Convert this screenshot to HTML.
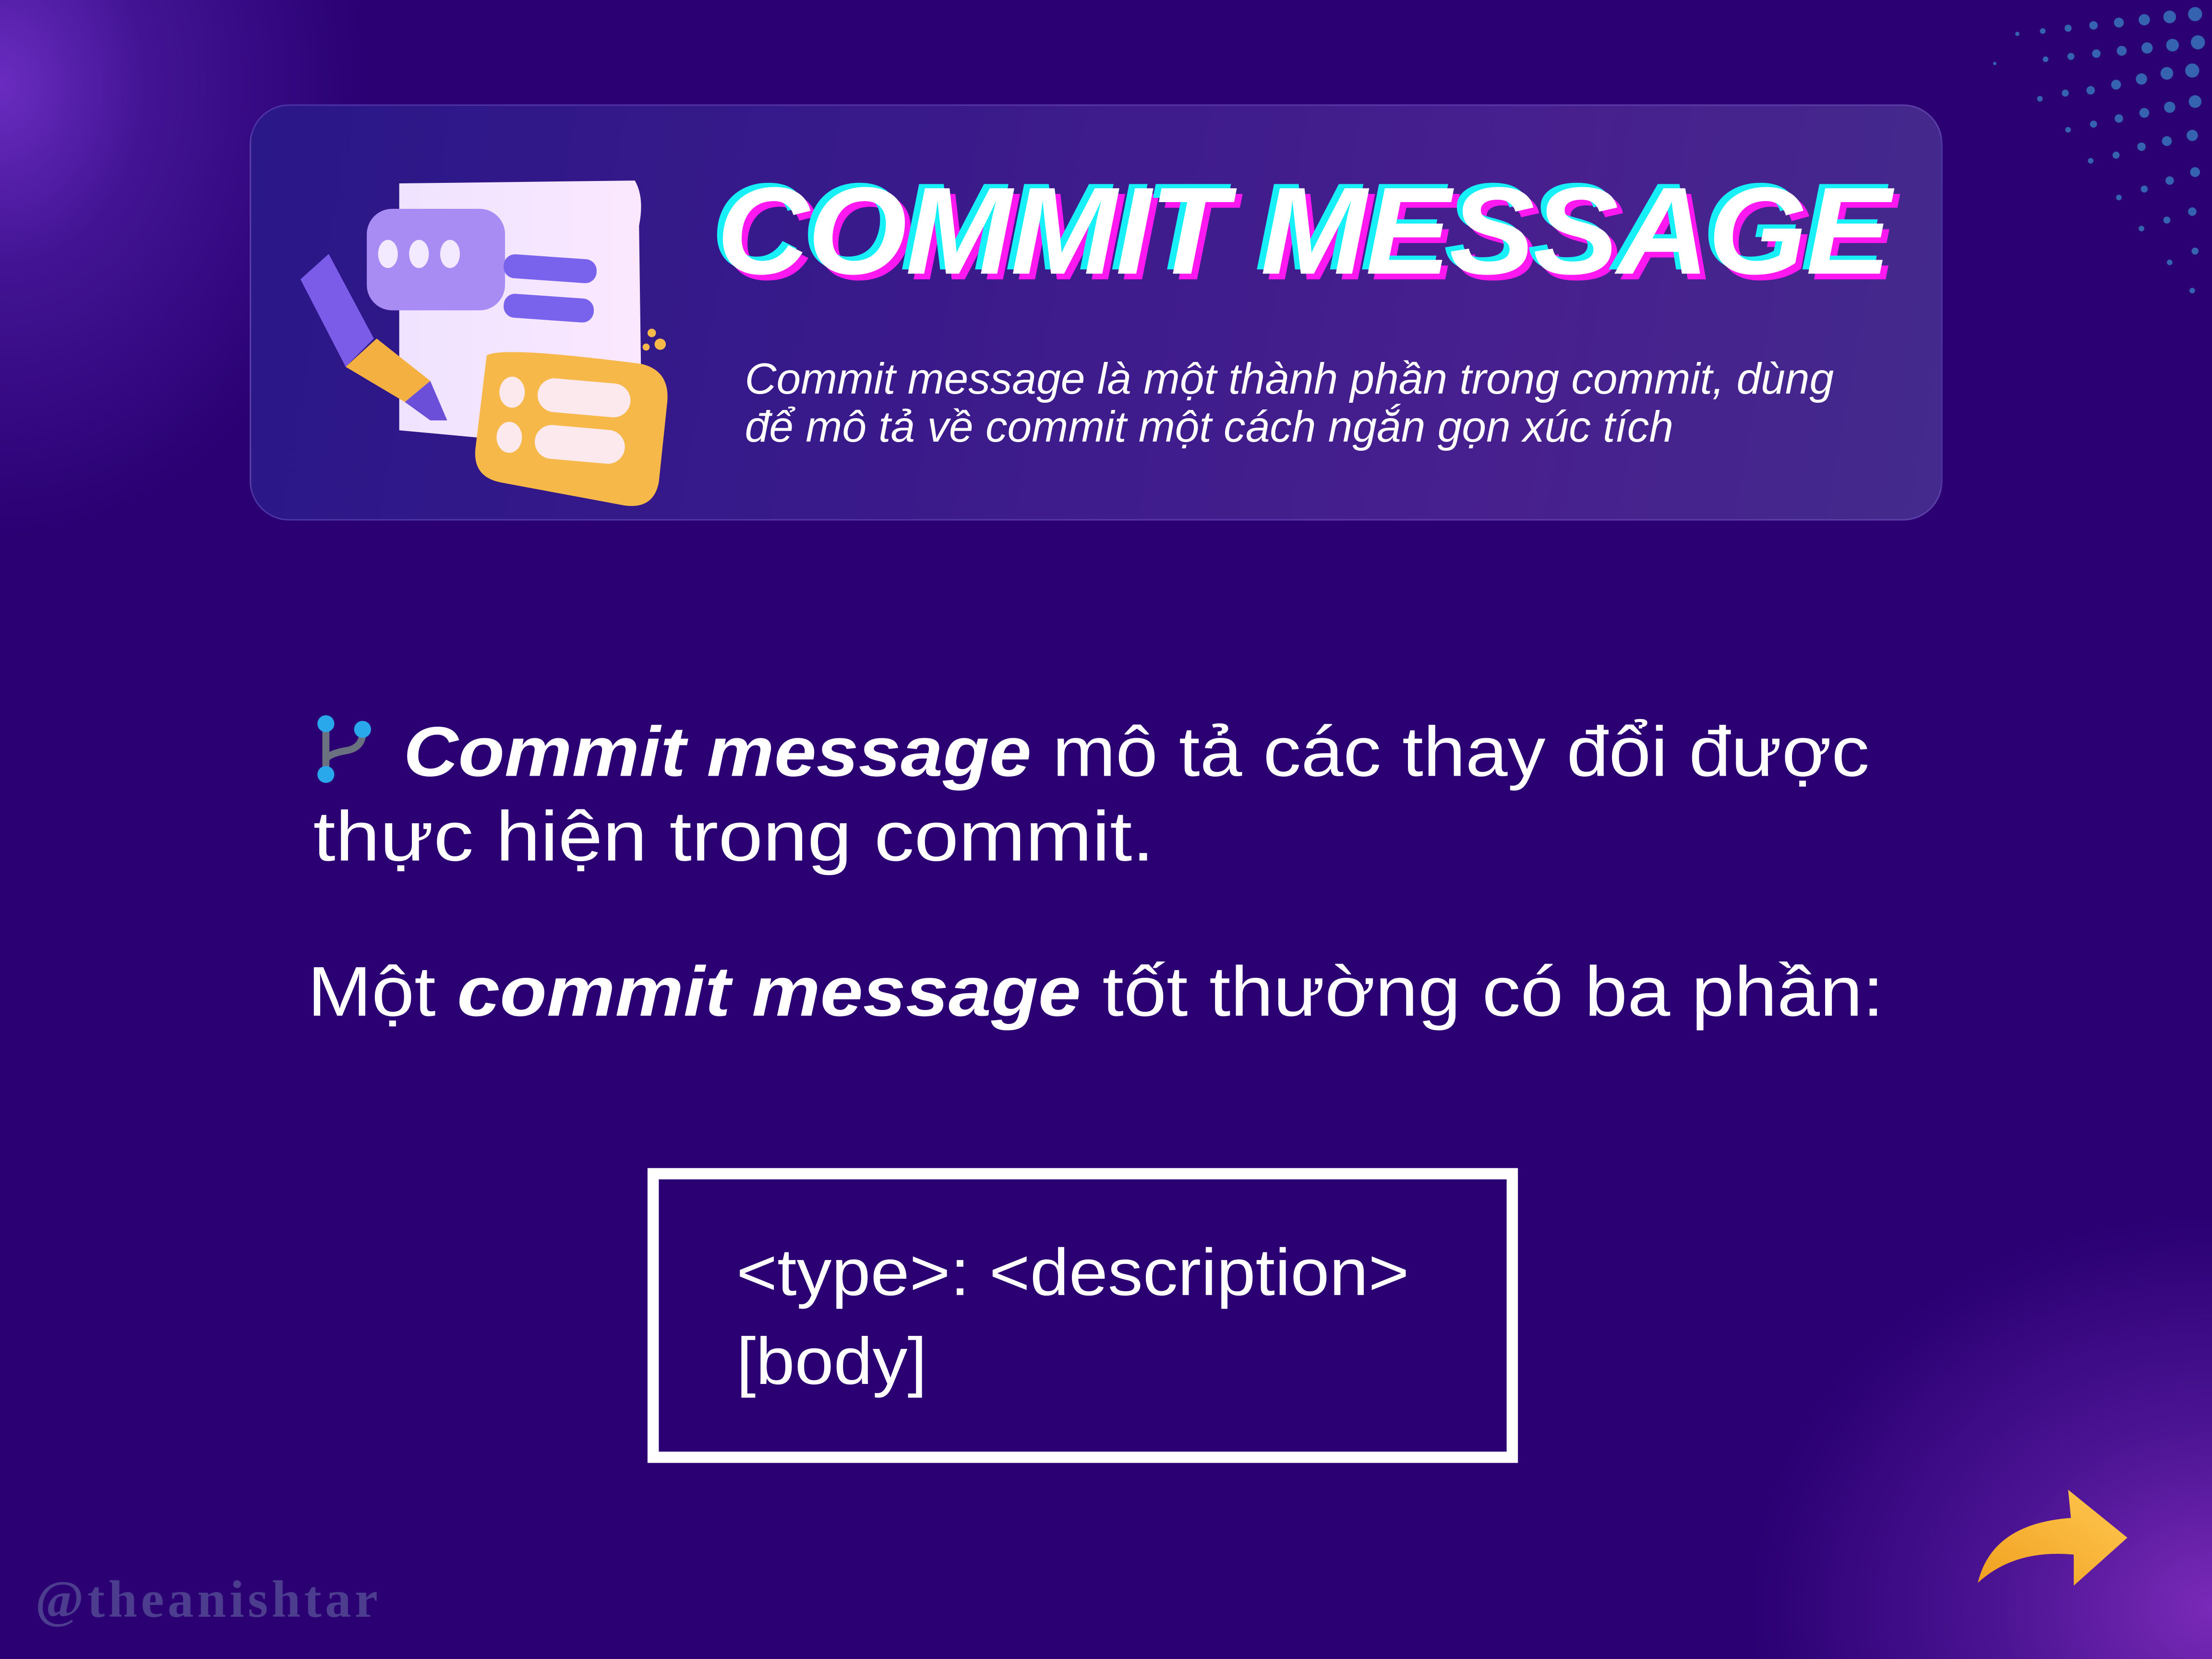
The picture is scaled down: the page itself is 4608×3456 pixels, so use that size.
<!DOCTYPE html>
<html><head><meta charset="utf-8"><style>
html,body{margin:0;padding:0;width:4608px;height:3456px;overflow:hidden;background:#2a0073}
#s{position:absolute;left:0;top:0;width:1568px;height:1176px;transform:scale(2.938776);transform-origin:0 0;overflow:hidden;
background:radial-gradient(ellipse 260px 320px at 0px 60px,#6a2cc0 0%,rgba(90,40,180,.5) 40%,rgba(42,0,115,0) 100%),
radial-gradient(ellipse 330px 280px at 1568px 1140px,#7a2ab8 0%,rgba(110,40,180,.5) 45%,rgba(42,0,115,0) 100%),#2a0073;font-family:"Liberation Sans",sans-serif}
.abs{position:absolute}
#card{left:177px;top:74px;width:1200px;height:295px;border-radius:28px;border:1px solid rgba(140,110,220,.35);
background:linear-gradient(100deg,#2a1788 0%,#3a1a8a 40%,#47208e 75%,#432a8c 100%);box-sizing:border-box}
#title{left:508px;top:120px;font-size:88px;font-weight:bold;font-style:italic;color:#fff;letter-spacing:-1px;white-space:nowrap;
text-shadow:-4px -3px 0 #18f0f8,4px 4px 0 #ff18f0;line-height:1;transform:scaleX(1.03);transform-origin:0 0}
#sub{left:528px;top:252px;font-size:31px;font-style:italic;color:#fff;line-height:34px;white-space:nowrap}
.body{color:#fff;font-size:50px;white-space:nowrap;line-height:1;transform-origin:0 0}
.mono{color:#fff;font-size:47px;white-space:nowrap;line-height:1;transform:scaleX(1.055);transform-origin:0 0}
#box{left:459px;top:828px;width:617px;height:209px;border:8px solid #fff;box-sizing:border-box}
#wm{left:25px;top:1113px;font-family:"Liberation Serif",serif;font-weight:bold;font-size:37px;letter-spacing:2.5px;color:#4c3d8e}
</style></head><body><div id="s">
<svg class="abs" style="left:1360px;top:0" width="208" height="230">
<g fill="#3563b0">
<circle cx="196" cy="10" r="5"/><circle cx="178" cy="12" r="4.5"/><circle cx="160" cy="14" r="4"/><circle cx="142" cy="16" r="3.5"/><circle cx="124" cy="18" r="3"/><circle cx="106" cy="20" r="2.5"/><circle cx="88" cy="22" r="2"/><circle cx="70" cy="24" r="1.5"/>
<circle cx="198" cy="30" r="5"/><circle cx="180" cy="32" r="4.5"/><circle cx="162" cy="34" r="4"/><circle cx="144" cy="36" r="3.5"/><circle cx="126" cy="38" r="3"/><circle cx="108" cy="40" r="2.5"/><circle cx="90" cy="42" r="2"/><circle cx="54" cy="45" r="1.2"/>
<circle cx="194" cy="50" r="5"/><circle cx="176" cy="52" r="4.5"/><circle cx="158" cy="56" r="4"/><circle cx="140" cy="60" r="3.5"/><circle cx="122" cy="64" r="3"/><circle cx="104" cy="66" r="2.5"/><circle cx="86" cy="70" r="2"/>
<circle cx="196" cy="72" r="4.5"/><circle cx="178" cy="76" r="4"/><circle cx="160" cy="80" r="3.5"/><circle cx="142" cy="84" r="3"/><circle cx="124" cy="88" r="2.5"/><circle cx="106" cy="92" r="2"/>
<circle cx="194" cy="96" r="4"/><circle cx="176" cy="100" r="3.5"/><circle cx="158" cy="104" r="3"/><circle cx="140" cy="110" r="2.5"/><circle cx="122" cy="114" r="2"/>
<circle cx="196" cy="122" r="3.5"/><circle cx="178" cy="128" r="3"/><circle cx="160" cy="134" r="2.5"/><circle cx="142" cy="140" r="2"/>
<circle cx="194" cy="150" r="3"/><circle cx="176" cy="156" r="2.5"/><circle cx="158" cy="162" r="2"/>
<circle cx="196" cy="178" r="2.5"/><circle cx="178" cy="186" r="2"/><circle cx="194" cy="206" r="2"/>
</g></svg>
<div id="card" class="abs"></div>
<svg class="abs" style="left:205px;top:120px" width="280" height="250">
<defs><linearGradient id="pg" x1="0" x2="1"><stop offset="0" stop-color="#efe3ff"/><stop offset="1" stop-color="#fbe8ff"/></linearGradient></defs>
<path d="M78 10 L245 8 Q252 20 248 40 L250 190 L240 200 L78 185 Z" fill="url(#pg)"/>
<rect x="55" y="28" width="98" height="72" rx="18" fill="#a88cf4"/>
<ellipse cx="70" cy="60" rx="7" ry="10" fill="#f3eaff"/><ellipse cx="92" cy="60" rx="7" ry="10" fill="#f3eaff"/><ellipse cx="114" cy="60" rx="7" ry="10" fill="#f3eaff"/>
<rect x="152" y="62" width="66" height="17" rx="8" fill="#7a63ec" transform="rotate(4 185 70)"/>
<rect x="152" y="90" width="64" height="17" rx="8" fill="#7a63ec" transform="rotate(4 185 98)"/>
<path d="M8 78 L28 60 L60 120 L40 140 Z" fill="#7b5ce8"/>
<path d="M40 140 L62 120 L100 150 L82 165 Z" fill="#f4b040"/>
<path d="M82 165 L100 150 L112 178 L100 178 Z" fill="#6b4fd8"/>
<path d="M140 132 Q150 125 250 138 Q270 143 268 165 L262 222 Q258 242 236 238 L150 222 Q130 218 132 198 Z" fill="#f7b84a"/>
<ellipse cx="158" cy="158" rx="9" ry="11" fill="#fbe9ee"/><ellipse cx="156" cy="190" rx="9" ry="11" fill="#fbe9ee"/>
<rect x="176" y="150" width="66" height="24" rx="12" fill="#fbe9ee" transform="rotate(5 209 162)"/>
<rect x="174" y="183" width="64" height="24" rx="12" fill="#fbe9ee" transform="rotate(5 206 195)"/>
<circle cx="257" cy="116" r="3" fill="#f7b84a"/><circle cx="263" cy="124" r="4" fill="#f7b84a"/><circle cx="253" cy="126" r="2.5" fill="#f7b84a"/>
</svg>
<div id="title" class="abs">COMMIT MESSAGE</div>
<div id="sub" class="abs">Commit message là một thành phần trong commit, dùng<br>để mô tả về commit một cách ngắn gọn xúc tích</div>
<svg class="abs" style="left:222px;top:505px" width="46" height="52" viewBox="0 0 46 52">
<path d="M9 8 V44 M9 33 Q12 29 24 27 Q34 25 35 16" stroke="#6a7280" stroke-width="5" fill="none"/>
<circle cx="9" cy="8" r="6" fill="#2aa8ec"/><circle cx="35" cy="12" r="6" fill="#2aa8ec"/><circle cx="9" cy="44" r="6" fill="#2aa8ec"/>
</svg>
<div class="abs body" style="left:286px;top:508px;transform:scaleX(1.075)"><b><i>Commit message</i></b> mô tả các thay đổi được</div>
<div class="abs body" style="left:222px;top:568px;transform:scaleX(1.135)">thực hiện trong commit.</div>
<div class="abs body" style="left:218px;top:678px;transform:scaleX(1.09)">Một <b><i>commit message</i></b> tốt thường có ba phần:</div>
<div id="box" class="abs"></div>
<div class="abs mono" style="left:522px;top:878px">&lt;type&gt;: &lt;description&gt;</div>
<div class="abs mono" style="left:522px;top:941px">[body]</div>
<div id="wm" class="abs">@theanishtar</div>
<svg class="abs" style="left:1398px;top:1052px" width="112" height="75" viewBox="0 0 112 75">
<defs><linearGradient id="ag" x1="0" y1="1" x2="1" y2="0"><stop offset="0" stop-color="#f0a020"/><stop offset="1" stop-color="#ffc850"/></linearGradient></defs>
<path d="M4 70 Q14 28 70 24 L68 4 L110 38 L72 72 L72 50 Q30 46 4 70 Z" fill="url(#ag)"/>
</svg>
</div></body></html>
